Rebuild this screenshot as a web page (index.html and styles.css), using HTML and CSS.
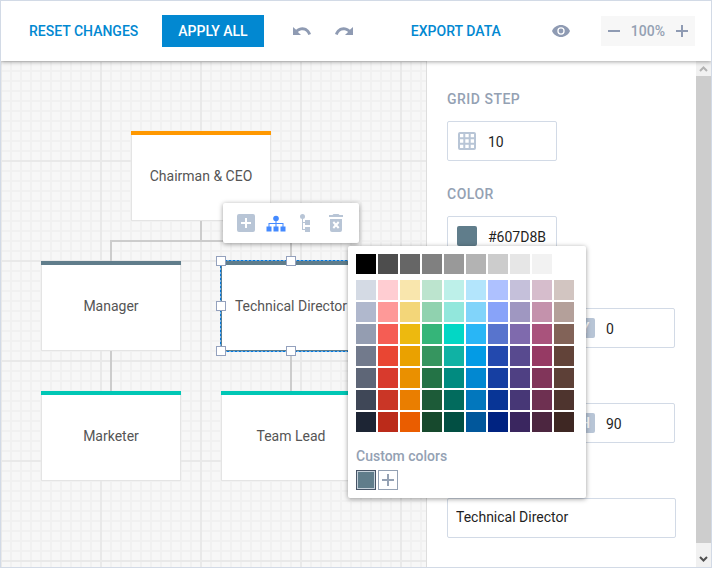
FILE: index.html
```html
<!DOCTYPE html>
<html lang="en">
<head>
<meta charset="utf-8">
<title>Org chart editor</title>
<link rel="stylesheet" href="styles.css">
</head>
<body>
<div class="editor">
  <header class="toolbar">
    <button class="btn btn-link" type="button">RESET CHANGES</button>
    <button class="btn btn-primary" type="button">APPLY ALL</button>
    <div class="history">
      <button class="icon-btn" type="button" aria-label="Undo"><svg width="18" height="9" viewBox="0 0 18 9"><path d="M9.500 .3C7 .3 4.800 1.200 3.100 2.700L0 0V8H8L4.900 4.900C6.100 3.900 7.700 3.300 9.500 3.300C12.200 3.300 14.400 5 15.300 7.900L18 7C16.500 3.100 13.400.3 9.500.3Z"/></svg></button>
      <button class="icon-btn" type="button" aria-label="Redo"><svg width="18" height="9" viewBox="0 0 18 9"><path transform="matrix(-1 0 0 1 18 0)" d="M9.500 .3C7 .3 4.800 1.200 3.100 2.700L0 0V8H8L4.900 4.900C6.100 3.900 7.700 3.300 9.500 3.300C12.200 3.300 14.400 5 15.300 7.900L18 7C16.500 3.100 13.400.3 9.500.3Z"/></svg></button>
    </div>
    <button class="btn btn-link btn-export" type="button">EXPORT DATA</button>
    <button class="icon-btn preview" type="button" aria-label="Preview"><svg width="18" height="12" viewBox="0 0 18 12"><path fill-rule="evenodd" d="M9 0C5 0 1.500 2.500 0 6C1.500 9.500 5 12 9 12S16.500 9.500 18 6C16.500 2.500 13 0 9 0ZM9 9.700A3.700 3.700 0 1 1 9 2.300A3.700 3.700 0 0 1 9 9.700ZM9 3.600A2.400 2.400 0 1 0 9 8.400A2.400 2.400 0 0 0 9 3.600Z"/></svg></button>
    <div class="zoom">
      <button class="icon-btn" type="button" aria-label="Zoom out"><svg width="12" height="12" viewBox="0 0 12 12"><path d="M0 5H12V7H0Z"/></svg></button>
      <span>100%</span>
      <button class="icon-btn" type="button" aria-label="Zoom in"><svg width="12" height="12" viewBox="0 0 12 12"><path d="M0 5H5V0H7V5H12V7H7V12H5V7H0Z"/></svg></button>
    </div>
  </header>

  <main class="workspace">
    <section class="canvas" aria-label="Diagram">
      <svg class="links" width="426" height="506" viewBox="0 0 426 506"><path d="M200 160V180M110 200V180H290V200M110 290V330M290 290V330"/></svg>
      <div class="node node-ceo">Chairman &amp; CEO</div>
      <div class="node node-manager">Manager</div>
      <div class="node node-director">Technical Director</div>
      <div class="node node-marketer">Marketer</div>
      <div class="node node-lead">Team Lead</div>
      <svg class="selection" width="152" height="102" viewBox="0 0 152 102">
        <rect class="outline" x="5.500" y="5.500" width="141" height="91"/>
        <g class="handles">
          <rect x="1.500" y="1.500" width="9" height="9"/><rect x="71.500" y="1.500" width="9" height="9"/><rect x="141.500" y="1.500" width="9" height="9"/>
          <rect x="1.500" y="46.500" width="9" height="9"/><rect x="141.500" y="46.500" width="9" height="9"/>
          <rect x="1.500" y="91.500" width="9" height="9"/><rect x="71.500" y="91.500" width="9" height="9"/><rect x="141.500" y="91.500" width="9" height="9"/>
        </g>
      </svg>
      <div class="node-tools">
        <button class="icon-btn" type="button" aria-label="Add"><svg width="18" height="18" viewBox="0 0 18 18"><path fill-rule="evenodd" d="M2 0H16Q18 0 18 2V16Q18 18 16 18H2Q0 18 0 16V2Q0 0 2 0ZM8 4V8H4V10H8V14H10V10H14V8H10V4Z"/></svg></button>
        <button class="icon-btn active" type="button" aria-label="Horizontal layout"><svg width="20" height="18" viewBox="0 0 20 18"><circle cx="10" cy="4.500" r="2.800"/><path d="M9.500 6H10.500V9H17.500V13H16.500V10H10.500V13H9.500V10H3.500V13H2.500V9H9.500Z"/><path d="M0.500 12.500H5.500V17.500H.5ZM7.500 12.500H12.500V17.500H7.500ZM14.500 12.500H19.500V17.500H14.500Z"/></svg></button>
        <button class="icon-btn" type="button" aria-label="Vertical layout"><svg width="18" height="18" viewBox="0 0 18 18"><circle cx="5.500" cy="2.500" r="2.500"/><path d="M5 4H6V8H8V6H13V11H8V9H6V15H8V13H13V18H8V16H5Z"/></svg></button>
        <button class="icon-btn" type="button" aria-label="Delete"><svg width="14" height="18" viewBox="0 0 14 18"><path fill-rule="evenodd" d="M4.500 0H9.500L10.500 1H14V3H0V1H3.500ZM1 5H13V16Q13 18 11 18H3Q1 18 1 16Z"/><path d="M4.300 8L9.700 14M9.700 8L4.300 14" stroke="#fff" stroke-width="2"/></svg></button>
      </div>
    </section>

    <aside class="panel">
      <form class="fields">
        <div class="field">
          <label class="caption" for="step">GRID STEP</label>
          <div class="box"><svg width="20" height="20" viewBox="0 0 20 20" fill="none" stroke="#b8c5d6" stroke-width="2"><rect x="2" y="2" width="16" height="16" rx="1"/><path d="M7.300 2V18M12.700 2V18M2 7.300H18M2 12.700H18"/></svg><input id="step" value="10"></div>
        </div>
        <div class="field">
          <label class="caption" for="color">COLOR</label>
          <div class="box"><span class="chip"></span><input id="color" value="#607D8B"></div>
        </div>
        <div class="pair">
          <div class="box"><label class="unit" for="y">Y</label><input id="y" value="0"></div>
        </div>
        <div class="pair">
          <div class="box"><label class="unit" for="h">H</label><input id="h" value="90"></div>
        </div>
        <input class="title-input" aria-label="Title" value="Technical Director">
      </form>
      <div class="scrollbar" aria-hidden="true">
        <svg class="up" width="9" height="6" viewBox="0 0 9 6"><path d="M1 5L4.500 1.500L8 5"/></svg>
        <div class="thumb"></div>
        <svg width="9" height="6" viewBox="0 0 9 6"><path d="M1 1L4.500 4.500L8 1"/></svg>
      </div>
    </aside>
  </main>

  <div class="palette" role="dialog" aria-label="Color picker">
    <div class="swatches" id="grays"></div>
    <div class="swatches" id="colors"></div>
    <div class="custom-title">Custom colors</div>
    <div class="swatches">
      <button class="swatch current" type="button" aria-label="#607D8B"></button>
      <button class="swatch add" type="button" aria-label="Add color"><svg width="12" height="12" viewBox="0 0 12 12"><path d="M0 5H5V0H7V5H12V7H7V12H5V7H0Z"/></svg></button>
    </div>
  </div>
</div>
<script src="palette.js"></script>
</body>
</html>
```
FILE: styles.css
```css
* { box-sizing: border-box; }

body {
  margin: 0;
  font: 14px/20px Roboto, sans-serif;
  color: #555;
}

button {
  font: inherit;
  border: 0;
  padding: 0;
  background: none;
}

.editor {
  position: relative;
  display: flex;
  flex-direction: column;
  min-height: 100vh;
  border: 1px solid #d2dae6;
  overflow: hidden;
}

/* Toolbar */
.toolbar {
  position: relative;
  z-index: 1;
  display: flex;
  align-items: center;
  height: 60px;
  padding: 0 16px 0 12px;
  background: #fff;
  box-shadow: 0 1px 4px rgba(0, 0, 0, 0.35);
}

.btn {
  height: 32px;
  padding: 0 16px;
  font-weight: 500;
  white-space: nowrap;
}

.btn-link { color: #0288d1; }

.btn-primary {
  margin-left: 8px;
  color: #fff;
  background: #0288d1;
}

.icon-btn {
  display: flex;
  align-items: center;
  justify-content: center;
  fill: #8f9bb3;
}

.history {
  display: flex;
  gap: 24px;
  margin-left: 29px;
}

.btn-export { margin-left: auto; }
.preview { margin-left: 35px; }

.zoom {
  display: flex;
  align-items: center;
  gap: 11px;
  height: 30px;
  margin-left: 31px;
  padding: 0 7px;
  font-weight: 500;
  color: #94a1b3;
  background: #f7f7f7;
}

/* Canvas */
.workspace {
  flex: 1;
  display: flex;
}

.canvas {
  position: relative;
  flex: 1;
  background-color: #f7f7f7;
  background-image:
    linear-gradient(90deg, #e9e9e9 2px, transparent 2px),
    linear-gradient(#e9e9e9 2px, transparent 2px),
    linear-gradient(90deg, #f1f1f1 2px, transparent 2px),
    linear-gradient(#f1f1f1 2px, transparent 2px);
  background-size: 100px 100px, 100px 100px, 10px 10px, 10px 10px;
  background-position: -1px -1px;
}

.links {
  position: absolute;
  left: 0;
  top: 0;
  fill: none;
  stroke: #ccc;
  stroke-width: 2;
}

.node {
  position: absolute;
  width: 140px;
  height: 90px;
  display: flex;
  align-items: center;
  justify-content: center;
  border: 1px solid #e4e4e4;
  border-top: 0;
  background: #fff;
  white-space: nowrap;
}

.node::before {
  content: "";
  position: absolute;
  inset: 0 -1px auto;
  height: 4px;
  background: #607d8b;
}

.node-ceo { left: 130px; top: 70px; }
.node-ceo::before { background: #ff9800; }
.node-manager { left: 40px; top: 200px; }
.node-director { left: 220px; top: 200px; border-color: #607d8b; }
.node-marketer { left: 40px; top: 330px; }
.node-lead { left: 220px; top: 330px; }
.node-marketer::before,
.node-lead::before { background: #00c7b5; }

.selection {
  position: absolute;
  left: 214px;
  top: 194px;
  fill: none;
}

.outline {
  stroke: #0378dd;
  stroke-dasharray: 3 1;
}

.handles {
  fill: #fff;
  stroke: #94a1bd;
}

.node-tools {
  position: absolute;
  left: 222px;
  top: 142px;
  display: flex;
  align-items: center;
  gap: 10px;
  height: 40px;
  padding: 0 13px;
  background: #fff;
  border-radius: 2px;
  box-shadow: 0 1px 5px rgba(0, 0, 0, 0.4);
}

.node-tools .icon-btn {
  width: 20px;
  height: 20px;
  fill: #b8c5d6;
}

.node-tools .active { fill: #448aff; }

/* Properties panel */
.panel {
  display: flex;
  width: 285px;
  border-left: 1px solid #ddd;
  background: #fff;
}

.fields {
  flex: 1;
  padding: 28px 20px 0;
}

.field {
  margin-bottom: 23px;
}

.caption {
  display: block;
  margin-bottom: 12px;
  font-weight: 500;
  letter-spacing: 0.5px;
  color: #94a1b3;
}

.box {
  display: flex;
  align-items: center;
  gap: 11px;
  width: 110px;
  height: 40px;
  padding: 0 9px;
  border: 1px solid #d2dae6;
  border-radius: 2px;
}

.box input {
  flex: 1;
  min-width: 0;
  height: 36px;
  padding: 2px 0 0;
  border: 0;
  outline: 0;
  font: inherit;
  color: #1f1f1f;
}

.box svg, .chip, .unit { flex: none; }

.chip {
  width: 20px;
  height: 20px;
  border-radius: 2px;
  background: #607d8b;
}

.pair {
  display: flex;
  justify-content: flex-end;
  margin: 52px 1px 55px 0;
}

.pair + .pair { margin-top: 0; }

.unit {
  width: 20px;
  height: 20px;
  border-radius: 2px;
  background: #b8c5d6;
  color: #fff;
  font-weight: 500;
  text-align: center;
}

.title-input {
  width: 100%;
  height: 40px;
  padding: 0 8px 2px;
  border: 1px solid #d2dae6;
  border-radius: 2px;
  font: inherit;
  color: #1f1f1f;
}

.scrollbar {
  display: flex;
  flex-direction: column;
  align-items: center;
  width: 15px;
  padding: 5px 0;
  background: #f1f1f1;
}

.scrollbar svg {
  fill: none;
  stroke: #505050;
  stroke-width: 2;
}

.scrollbar .up { stroke: #b3b3b3; }

.thumb {
  flex: 1;
  width: 100%;
  margin: 4px 0 13px;
  background: #cdcdcd;
}

/* Color picker */
.palette {
  position: absolute;
  z-index: 2;
  left: 347px;
  top: 245px;
  width: 238px;
  padding: 8px;
  background: #fff;
  border-radius: 2px;
  box-shadow: 0 1px 5px rgba(0, 0, 0, 0.4);
}

.swatches {
  display: grid;
  grid-template-columns: repeat(10, 20px);
  gap: 2px;
}

#grays { margin-bottom: 6px; }

.swatch {
  height: 20px;
}

.custom-title {
  margin: 14px 0 4px;
  font-weight: 500;
  color: #94a1b3;
}

.current {
  border: 1px solid #475466;
  background: #607d8b;
  box-shadow: inset 0 0 0 1px #c5d0da;
}

.add {
  display: flex;
  align-items: center;
  justify-content: center;
  border: 1px solid #94a1b3;
  fill: #94a1b3;
}
```
FILE: palette.js
```js
const grays = ['#000000', '#4d4d4d', '#666666', '#808080', '#999999', '#b3b3b3', '#cccccc', '#e6e6e6', '#f2f2f2'];

const colors = [
  '#d4dae4', '#ffcdd2', '#f9e6ad', '#bce4ce', '#bdf0e9', '#b3e5fc', '#aec1ff', '#c5c0da', '#d6bdcc', '#d2c5c1',
  '#b0b8cd', '#fe9998', '#f3d679', '#90d2af', '#92e7dc', '#81d4fa', '#88a3f9', '#9f97c1', '#c492ac', '#b4a09a',
  '#949db1', '#f55d54', '#edb90f', '#35b579', '#02d7c5', '#29b6f6', '#5874cd', '#7f6aad', '#a9537c', '#826358',
  '#727a8c', '#e94633', '#eaa100', '#36955f', '#10b2a4', '#039be5', '#2349ae', '#584a8f', '#963a64', '#624339',
  '#5e6677', '#d83a2d', '#ea9000', '#247346', '#018b80', '#0288d1', '#163fa2', '#4f4083', '#81355a', '#5d4037',
  '#3f4757', '#ca3626', '#ea7e00', '#1d5b38', '#026b5d', '#0277bd', '#083596', '#473776', '#6e3051', '#4e342e',
  '#1d2534', '#bb2b1a', '#ea5d00', '#17492d', '#024f43', '#01579b', '#002381', '#3a265f', '#4c2640', '#3e2723'
];

function fill(id, list) {
  const box = document.getElementById(id);
  for (const color of list) {
    const button = document.createElement('button');
    button.type = 'button';
    button.className = 'swatch';
    button.style.background = color;
    button.setAttribute('aria-label', color);
    box.append(button);
  }
}

fill('grays', grays);
fill('colors', colors);
```
